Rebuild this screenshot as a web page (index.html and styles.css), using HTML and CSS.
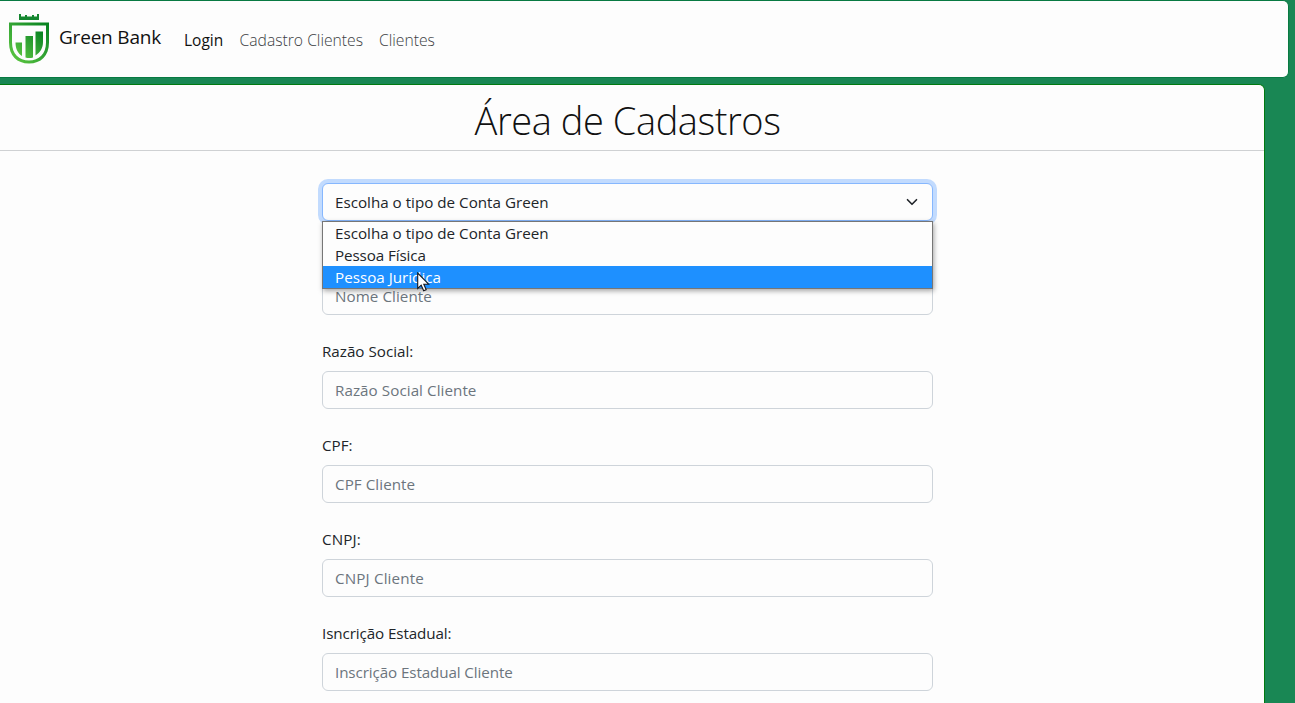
FILE: index.html
```html
<!DOCTYPE html>
<html lang="pt-BR">
<head>
<meta charset="utf-8">
<title>Green Bank</title>
<link rel="stylesheet" href="styles.css">
</head>
<body>
<nav class="navbar">
  <svg class="logo" width="42" height="52" viewBox="0 0 42 52">
    <defs><linearGradient id="g" x1="0" y1="1" x2="1" y2="0"><stop offset="0" stop-color="#62cc42"/><stop offset=".5" stop-color="#35a535"/><stop offset="1" stop-color="#04801f"/></linearGradient></defs>
    <path fill="#14862f" d="M11 1h2v2.500h4V2h2v1.500h5V2h2v1.500h3V1h2v6H11z"/>
    <path fill="url(#g)" fill-rule="evenodd" d="M1 9.500h40v20C41 43 33 50.500 21 50.500S1 43 1 29.500zM4 12.500v17c0 11.500 7 18 17 18s17-6.500 17-18v-17z"/>
    <path fill="url(#g)" d="M7.500 29.500H14v13.500c-4-2.600-6.500-7-6.500-13.500zM17.500 23H25v21.500c-2.500.7-5 .7-7.500 0zM27.500 18.500H35V29c0 6-2.800 10.500-7.500 13.500z"/>
  </svg>
  <a class="brand">Green Bank</a>
  <a class="link active">Login</a>
  <a class="link">Cadastro Clientes</a>
  <a class="link">Clientes</a>
</nav>
<main class="card">
  <h1 class="title">Área de Cadastros</h1>
  <form class="form">
    <div class="select-wrap">
      <div class="control select"><span>Escolha o tipo de Conta Green</span>
        <svg width="12" height="12" viewBox="0 0 16 16"><path d="m2 5 6 6 6-6" fill="none" stroke="#212529" stroke-width="2.200" stroke-linecap="round" stroke-linejoin="round"/></svg>
      </div>
      <div class="menu">
        <div class="option">Escolha o tipo de Conta Green</div>
        <div class="option tight">Pessoa Física</div>
        <div class="option selected">Pessoa Jurídica</div>
      </div>
      <svg class="cursor" width="13" height="20" viewBox="0 0 13 20"><path d="M.7 1v15.500l3.500-3.300 2.500 5.500 2.500-1-2.400-5.500h4.800z" fill="#fff" stroke="#16161c" stroke-width="1.100"/></svg>
    </div>
    <div class="field"><div class="label"></div><div class="control"><span class="placeholder loose">Nome Cliente</span></div></div>
    <div class="field"><label class="label">Razão Social:</label><div class="control"><span class="placeholder loose">Razão Social Cliente</span></div></div>
    <div class="field"><label class="label">CPF:</label><div class="control"><span class="placeholder loose">CPF Cliente</span></div></div>
    <div class="field"><label class="label looser">CNPJ:</label><div class="control"><span class="placeholder looser">CNPJ Cliente</span></div></div>
    <div class="field"><label class="label tight">Isncrição Estadual:</label><div class="control"><span class="placeholder tight">Inscrição Estadual Cliente</span></div></div>
  </form>
</main>
</body>
</html>
```
FILE: styles.css
```css
* { box-sizing: border-box; }
body {
  margin: 0;
  height: 703px;
  overflow: hidden;
  background: #198754;
  color: #212529;
  font: 400 15.200px/24px "Open Sans", "Noto Sans", sans-serif;
}
.navbar {
  display: flex;
  align-items: center;
  width: 1289px;
  height: 78px;
  padding: 0 0 0 8px;
  background: #fdfdfd;
  border: 1px solid #087a42;
  border-left: 0;
  border-radius: 0 6px 6px 0;
}
.logo { flex: none; }
.brand { width: 101px; margin: -4px 24px 0 9px; color: #111; font-size: 19px; letter-spacing: -.2px; line-height: 30px; white-space: nowrap; }
.link { margin: 1px 16px 0 0; color: #3c4043; font-size: 15.700px; font-weight: 300; white-space: nowrap; }
.link.active { width: 39.500px; color: #111; font-size: 15.500px; font-weight: 400; }
.card {
  width: 1265px;
  height: 640px;
  margin-top: 6px;
  background: #fdfdfd;
  border: 1px solid #007a10;
  border-left: 0;
  border-radius: 0 6px 0 0;
}
.title {
  height: 66px;
  margin: 0;
  padding-right: 9px;
  border-bottom: 1px solid #cfd1d3;
  color: #111;
  font-size: 38px;
  font-weight: 300;
  letter-spacing: -.45px;
  line-height: 70px;
  text-align: center;
}
.form { width: 611px; margin: 32px 0 0 322px; }
.select-wrap { position: relative; margin-bottom: 24px; }
.control {
  display: flex;
  align-items: center;
  height: 38px;
  padding: 0 12px;
  background: #fdfdfd;
  border: 1px solid #ced4da;
  border-radius: 6px;
  white-space: nowrap;
}
.select {
  justify-content: space-between;
  padding-right: 14px;
  border-color: #86b7fe;
  box-shadow: 0 0 0 4px #c2dbfe;
}
.menu {
  position: absolute;
  z-index: 1;
  top: 38px;
  left: 0;
  width: 611px;
  background: #fdfdfd;
  border: 1px solid #767676;
  box-shadow: 1px 2px 5px rgba(0, 0, 0, .35);
}
.option { height: 22px; padding-left: 12px; line-height: 23px; white-space: nowrap; }
.option.selected { background: #1e90ff; color: #fff; }
.cursor { position: absolute; z-index: 2; left: 95px; top: 89px; }
.field { height: 70px; margin-bottom: 24px; }
.label { display: block; height: 24px; margin-bottom: 8px; }
.placeholder { color: #6c757d; }
.tight { letter-spacing: -.1px; }
.loose { letter-spacing: .06px; }
.looser { letter-spacing: .15px; }
```
